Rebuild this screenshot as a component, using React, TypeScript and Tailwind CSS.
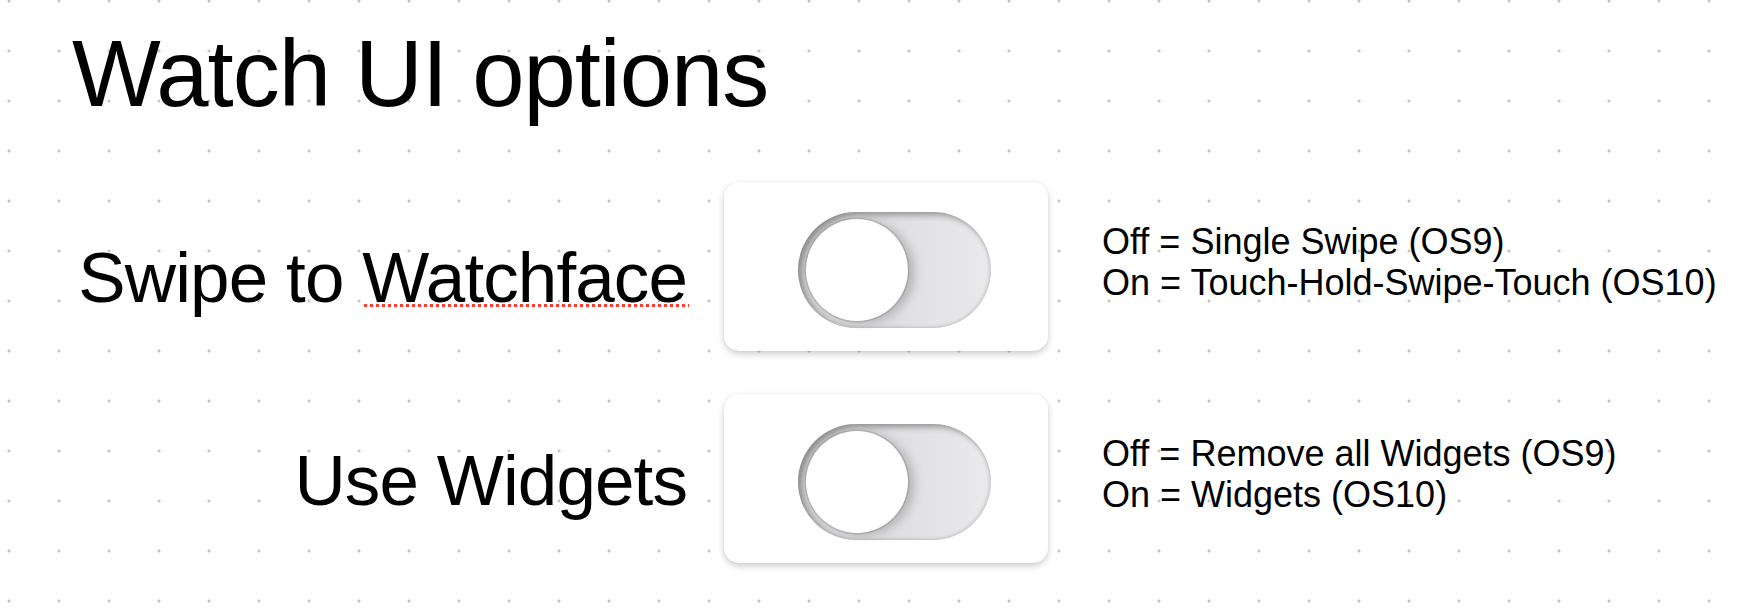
const rows = [
  {
    label: 'Swipe to',
    flagged: 'Watchface',
    labelTop: 'mt-[60px]',
    lines: ['Off = Single Swipe (OS9)', 'On = Touch-Hold-Swipe-Touch (OS10)'],
  },
  {
    label: 'Use Widgets',
    flagged: '',
    labelTop: 'mt-[51px]',
    lines: ['Off = Remove all Widgets (OS9)', 'On = Widgets (OS10)'],
  },
];

function Toggle() {
  return (
    <div className="w-[324px] h-[169px] shrink-0 rounded-[15px] bg-white shadow-[0_3px_7px_rgba(0,0,0,0.2),0_0_2px_rgba(0,0,0,0.06)] pl-[74px] pt-[30px]">
      <div className="w-[193px] h-[116px] rounded-full bg-gradient-to-r from-[#d4d4d6] to-[#eaeaec] shadow-[inset_4px_3px_6px_rgba(0,0,0,0.35),inset_-2px_-1px_3px_rgba(0,0,0,0.1)] pl-[8px] pt-[7px]">
        <div className="w-[102px] h-[102px] rounded-full bg-white shadow-[7px_2px_10px_rgba(0,0,0,0.18),0_0_0_1.5px_rgba(0,0,0,0.12)]" />
      </div>
    </div>
  );
}

export default function App() {
  return (
    <div className="min-h-screen w-full bg-white bg-[radial-gradient(circle,#c4c4c4_1.2px,transparent_1.8px)] bg-[length:50px_50px] bg-[position:-16px_-24px] font-['Liberation_Sans',Arial,sans-serif] text-black">
      <h1 className="pl-[72px] pt-[27px] text-[94px] leading-none tracking-[-1px]">Watch UI options</h1>

      <div className="mt-[61px] flex flex-col gap-[43px]">
        {rows.map((row, i) => (
          <div key={i} className="flex items-start">
            <div className={`w-[687px] shrink-0 text-right text-[71px] leading-none tracking-[-0.9px] ${row.labelTop}`}>
              {row.label}
              {row.flagged && (
                <>
                  {' '}
                  <span className="relative">
                    {row.flagged}
                    {/* spell-check squiggle */}
                    <span className="absolute left-[2px] right-[-2px] bottom-[10px] h-[3px] bg-[repeating-linear-gradient(to_right,#ff3b30_0_3px,transparent_3px_6px)]" />
                  </span>
                </>
              )}
            </div>
            <div className="ml-[37px]">
              <Toggle />
            </div>
            <div className="ml-[54px] mt-[39px] text-[36px] leading-[41px] whitespace-nowrap">
              {row.lines.map((l) => (
                <div key={l}>{l}</div>
              ))}
            </div>
          </div>
        ))}
      </div>
    </div>
  );
}
